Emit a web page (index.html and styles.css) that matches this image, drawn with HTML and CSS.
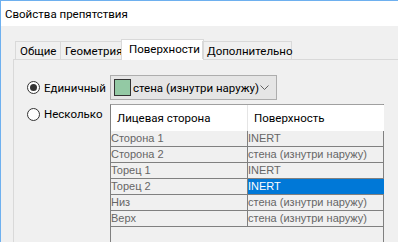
FILE: index.html
```html
<!DOCTYPE html>
<html lang="ru">
<head>
  <meta charset="UTF-8">
  <title>Свойства препятствия</title>
  <link rel="stylesheet" href="styles.css">
</head>
<body>
  <div class="window">
    <div class="titlebar">Свойства препятствия</div>
    <div class="dialog">
      <!-- вкладки -->
      <div class="tabs">
        <div class="tab tab-general">Общие</div>
        <div class="tab tab-geometry">Геометрия</div>
        <div class="tab tab-surfaces active">Поверхности</div>
        <div class="tab tab-extra">Дополнительно</div>
      </div>
      <div class="panel">
        <div class="mode-grid">
          <div class="radio checked"><span class="circle"></span>Единичный</div>
          <div class="combo">
            <span class="swatch"></span>
            <span class="combo-text">стена (изнутри наружу)</span>
            <svg class="chevron" width="9" height="5" viewBox="0 0 9 5"><polyline points="0.5,0.5 4.5,4.5 8.5,0.5" fill="none" stroke="#606060" stroke-width="1"/></svg>
          </div>
          <div class="radio second"><span class="circle"></span>Несколько</div>
          <div class="grid-box">
            <table class="grid">
              <tr class="head"><th>Лицевая сторона</th><th>Поверхность</th></tr>
              <tr><td>Сторона 1</td><td>INERT</td></tr>
              <tr><td>Сторона 2</td><td>стена (изнутри наружу)</td></tr>
              <tr><td>Торец 1</td><td>INERT</td></tr>
              <tr><td>Торец 2</td><td class="selected">INERT</td></tr>
              <tr><td>Низ</td><td>стена (изнутри наружу)</td></tr>
              <tr><td>Верх</td><td>стена (изнутри наружу)</td></tr>
            </table>
          </div>
        </div>
      </div>
    </div>
  </div>
</body>
</html>
```

FILE: styles.css
```css
html, body {
  margin: 0;
  padding: 0;
  width: 398px;
  height: 242px;
  overflow: hidden;
  font-family: Roboto, "Noto Sans", sans-serif;
  font-size: 11.5px;
  color: #000;
}
.window {
  border-top: 1px solid #6eb0ef;
  border-left: 1px solid #6eb0ef;
  height: 241px;
  overflow: hidden;
  background: #f0f0f0;
}
.titlebar {
  height: 25px;
  line-height: 27px;
  padding-left: 4px;
  background: #fff;
  white-space: nowrap;
}
.dialog {
  padding: 13px 0 0 12px;
}
.tabs {
  display: flex;
  align-items: flex-end;
  height: 20px;
  margin-left: 2px;
  position: relative;
  z-index: 1;
}
.tab {
  box-sizing: border-box;
  height: 18px;
  line-height: 19px;
  padding-left: 4px;
  border: 1px solid #d9d9d9;
  border-bottom: none;
  margin-right: -1px;
  white-space: nowrap;
}
.tab-general { width: 46px; }
.tab-geometry { width: 65px; }
.tab-surfaces { width: 83px; }
.tab-extra { width: 90px; }
.tab.active {
  height: 21px;
  line-height: 18px;
  margin: 0 -2px -1px -3px;
  padding-left: 7px;
  background: #fff;
}
.panel {
  border-top: 1px solid #d9d9d9;
  border-left: 1px solid #d9d9d9;
  padding: 15px 0 0 13px;
  height: 250px;
}
.mode-grid {
  display: grid;
  grid-template-columns: 83px 274px;
  row-gap: 4px;
  align-items: center;
}
.radio {
  display: flex;
  align-items: center;
  gap: 4px;
  white-space: nowrap;
}
.radio.second {
  align-self: start;
  margin-top: 3px;
}
.circle {
  width: 11px;
  height: 11px;
  border: 1px solid #333;
  border-radius: 50%;
  background: #fff;
  display: flex;
  align-items: center;
  justify-content: center;
}
.radio.checked .circle::after {
  content: "";
  width: 7px;
  height: 7px;
  border-radius: 50%;
  background: #333;
}
.combo {
  width: 162px;
  height: 23px;
  border: 1px solid #adadad;
  background: #e5e5e5;
  display: flex;
  align-items: center;
  padding-left: 3px;
  white-space: nowrap;
}
.swatch {
  width: 15px;
  height: 15px;
  border: 1px solid #333;
  background: #93c9a4;
  margin-right: 2px;
}
.chevron {
  margin-left: auto;
  margin-right: 7px;
}
.grid-box {
  border-top: 1px solid #a0a0a0;
  border-left: 1px solid #808080;
  border-right: 1px solid #808080;
  height: 200px;
  align-self: start;
}
.grid {
  border-collapse: collapse;
  width: 273px;
  table-layout: fixed;
  font-family: "Liberation Sans", sans-serif;
  font-size: 11px;
  color: #666;
}
.grid th {
  background: #fff;
  height: 26px;
  padding: 0 0 0 6px;
  text-align: left;
  font-family: Roboto, sans-serif;
  font-size: 11.5px;
  font-weight: normal;
  color: #000;
}
.grid th:first-child {
  width: 130px;
  border-right: 1px solid #e5e5e5;
}
.grid td {
  height: 15px;
  padding: 0;
  line-height: 15px;
  border-bottom: 1px solid #808080;
  white-space: nowrap;
}
.grid td:first-child {
  border-right: 1px solid #808080;
}
.grid td.selected {
  background: #0078d7;
  color: #fff;
}
```
